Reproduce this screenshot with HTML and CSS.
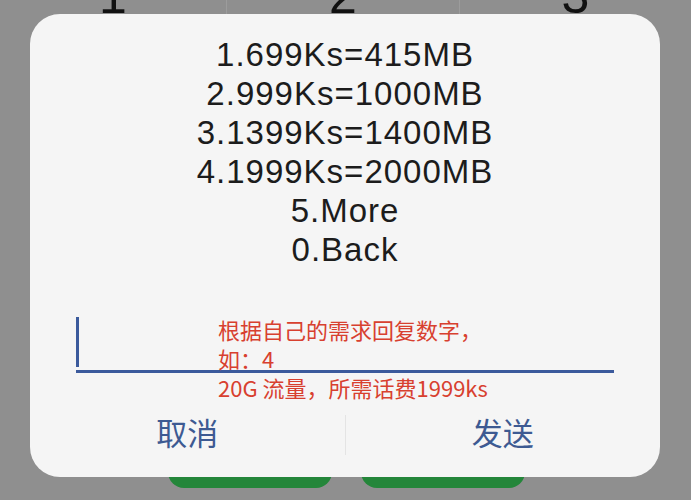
FILE: index.html
```html
<!DOCTYPE html>
<html lang="en">
<head>
    <meta charset="UTF-8">
    <meta name="viewport" content="width=device-width, initial-scale=1.0">
    <title>USSD</title>
    <link rel="stylesheet" href="styles.css">
</head>
<body>
    <div class="screen">
        <div class="keypad">
            <div class="key">1</div>
            <div class="key">2</div>
            <div class="key">3</div>
        </div>

        <div class="actions">
            <div class="call-btn"></div>
            <div class="call-btn"></div>
        </div>

        <div class="dialog">
            <div class="menu">
                <div>1.699Ks=415MB</div>
                <div>2.999Ks=1000MB</div>
                <div>3.1399Ks=1400MB</div>
                <div>4.1999Ks=2000MB</div>
                <div>5.More</div>
                <div>0.Back</div>
            </div>

            <div class="input">
                <span class="cursor"></span>
            </div>

            <div class="buttons">
                <button class="dlg-btn">取消</button>
                <span class="sep"></span>
                <button class="dlg-btn">发送</button>
            </div>
        </div>

        <!-- red note written over the screenshot -->
        <div class="note">
            根据自己的需求回复数字，<br>
            如：4<br>
            20G 流量，所需话费1999ks
        </div>
    </div>
</body>
</html>
```

FILE: styles.css
```css
body {
    margin: 0;
    padding: 0;
    background-color: #8f8f8f;
    font-family: "Liberation Sans", Arial, "Noto Sans CJK SC", sans-serif;
}

.screen {
    position: relative;
    width: 691px;
    height: 500px;
    overflow: hidden;
    display: flex;
    flex-direction: column;
    justify-content: space-between;
}

.keypad {
    display: grid;
    grid-template-columns: 227px 233px 231px;
    margin-top: -29px;
}

.key {
    font-size: 50px;
    line-height: 50px;
    text-align: center;
    color: #111;
    border-right: 1px solid #9c9c9c;
    height: 80px;
}

.key:last-child {
    border-right: none;
}

.actions {
    display: flex;
    gap: 29px;
    padding-left: 168px;
    margin-bottom: 12px;
}

.call-btn {
    width: 164px;
    height: 40px;
    background-color: #24863a;
    border-radius: 0 0 16px 16px;
}

.dialog {
    position: absolute;
    top: 14px;
    left: 30px;
    width: 630px;
    height: 463px;
    background-color: #f5f5f5;
    border-radius: 30px;
    padding-top: 21px;
    box-sizing: border-box;
}

.menu {
    text-align: center;
    font-size: 33px;
    line-height: 39px;
    letter-spacing: 1px;
    color: #1c1c1c;
}

.input {
    margin: 48px 46px 0;
    height: 53px;
    border-bottom: 3px solid #3b5a9c;
}

.cursor {
    display: block;
    width: 3px;
    height: 50px;
    background-color: #3b5a9c;
}

.buttons {
    display: flex;
    align-items: center;
    height: 85px;
    margin-top: 19px;
}

.dlg-btn {
    flex: 1;
    height: 100%;
    background: none;
    border: none;
    font-family: "Noto Sans CJK SC", sans-serif;
    font-size: 31px;
    color: #3d5a92;
    padding: 0 0 6px;
}

.sep {
    width: 1px;
    height: 40px;
    background-color: #e4e4e4;
}

.note {
    position: absolute;
    left: 218px;
    top: 315px;
    font-family: "Noto Sans CJK SC", sans-serif;
    font-size: 22px;
    line-height: 29px;
    color: #d8402f;
}
```
